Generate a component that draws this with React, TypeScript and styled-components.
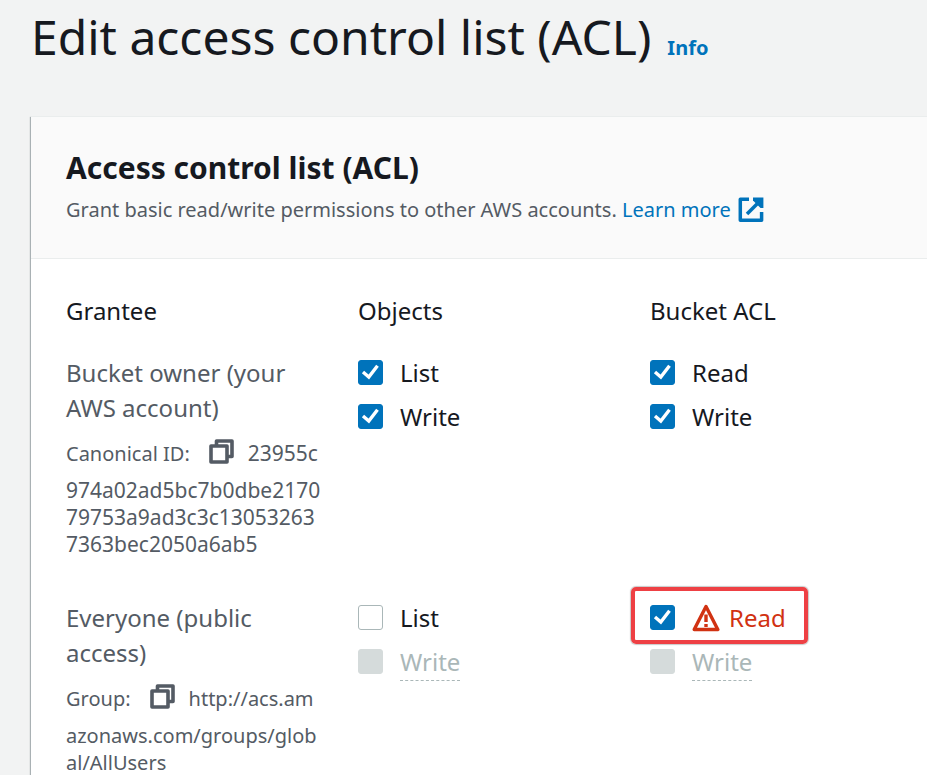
import React, { useId, useState } from "react";
import styled, { createGlobalStyle } from "styled-components";

const GlobalStyle = createGlobalStyle`
  *, *::before, *::after { box-sizing: border-box; }
  html { background: #f2f3f3; overflow: hidden; }
  body {
    margin: 0;
    font-family: "Noto Sans", "Open Sans", sans-serif;
    font-size: 24px;
    line-height: 35px;
    color: #16191f;
  }
`;

const Page = styled.main`
  padding-left: 31px;
`;

const PageHeader = styled.header`
  display: flex;
  align-items: baseline;
  gap: 16px;
  padding: 5px 0 47px;
`;

const PageTitle = styled.h1`
  margin: 0;
  font-size: 48px;
  line-height: 64px;
  font-weight: 400;
  white-space: nowrap;
`;

const InfoLink = styled.a`
  color: #0073bb;
  font-size: 20px;
  font-weight: 700;
  text-decoration: none;
`;

const Panel = styled.section`
  background: #fff;
  border-top: 1px solid #eaeded;
  box-shadow: -1px 1px 1px 0 rgba(0, 28, 36, 0.3);
`;

const PanelHeader = styled.header`
  padding: 29px 35px 31px;
  background: #fafafa;
  border-bottom: 1px solid #eaeded;
`;

const PanelTitle = styled.h2`
  margin: 0;
  font-size: 30px;
  line-height: 44px;
  font-weight: 700;
`;

const PanelDescription = styled.p`
  margin: 2px 0 0;
  color: #545b64;
  font-size: 20px;
  white-space: nowrap;
`;

const TextLink = styled.a`
  display: inline-flex;
  align-items: center;
  gap: 7px;
  color: #0073bb;
  text-decoration: none;
`;

const GrantTable = styled.table`
  width: 100%;
  margin-top: 34px;
  padding: 0 0 0 35px;
  table-layout: fixed;
  border-collapse: separate;
  border-spacing: 0;
`;

const Column = styled.col<{ $rest?: boolean }>`
  width: ${(p) => (p.$rest ? "auto" : "292px")};
`;

const ColumnHeading = styled.th`
  padding: 0 40px 27px 0;
  font-weight: 400;
  text-align: left;
`;

const GranteeCell = styled.th`
  padding: 0 40px 42px 0;
  color: #545b64;
  font-weight: 400;
  text-align: left;
  vertical-align: top;
`;

const Cell = styled.td`
  padding: 0;
  vertical-align: top;
`;

const GranteeDetail = styled.div`
  margin-top: 10px;
  font-size: 20px;
  line-height: 27px;
`;

const DetailLine = styled.div`
  display: flex;
  align-items: center;
  height: 36px;
  white-space: nowrap;
`;

const DetailValue = styled.div<{ $hash?: boolean }>`
  font-size: ${(p) => (p.$hash ? "21px" : "20px")};
`;

const DetailText = styled.div`
  margin-top: 6px;
`;

const CopyButton = styled.button`
  display: flex;
  margin: 0 14px 3px 19px;
  padding: 0;
  border: 0;
  background: none;
  color: #545b64;
  cursor: pointer;
`;

const OptionList = styled.div`
  display: flex;
  flex-direction: column;
  align-items: flex-start;
  gap: 9px;
`;

const Option = styled.div`
  position: relative;
  display: flex;
  align-items: center;
  gap: 17px;
`;

const Tick = styled.input`
  appearance: none;
  width: 25px;
  height: 25px;
  margin: 0;
  border: 1px solid #aab7b8;
  border-radius: 3px;
  background: #fff;

  &:checked {
    border-color: #0073bb;
    background: #0073bb;
  }
  &:disabled {
    border-color: #d5dbdb;
    background: #d5dbdb;
  }
`;

const TickBox = styled.span`
  display: grid;
  flex: none;

  > * { grid-area: 1 / 1; }
  > svg { pointer-events: none; z-index: 1; }
`;

const OptionLabel = styled.label<{ $tone: "normal" | "warning" | "disabled" }>`
  position: relative;
  display: flex;
  align-items: center;
  gap: 9px;
  color: ${(p) =>
    p.$tone === "warning" ? "#d13212" : p.$tone === "disabled" ? "#aab7b8" : "#16191f"};

  &::after {
    content: ${(p) => (p.$tone === "disabled" ? '""' : "none")};
    position: absolute;
    left: 0;
    right: 0;
    bottom: -2px;
    border-bottom: 1px dashed #aab7b8;
  }
`;

const Highlight = styled.div`
  position: absolute;
  inset: -13px -22px -9px -19px;
  border: 4px solid #ee4044;
  border-radius: 5px;
  box-shadow: 0 0 1px 1px rgba(120, 120, 120, 0.4);
  pointer-events: none;
`;

function ExternalIcon() {
  return (
    <svg width="26" height="26" viewBox="0 0 26 26" fill="none" stroke="currentColor" strokeWidth="3.5" aria-hidden="true">
      <path d="M11 2.3H2.3V23.3H23.6V15" strokeLinejoin="round" />
      <path d="M9 17L21 5" />
      <path d="M15 0.5H25.4V11H22.5L15 3.5Z" fill="currentColor" stroke="none" />
    </svg>
  );
}

function CopyIcon() {
  return (
    <svg width="25" height="25" viewBox="0 0 25 25" fill="none" stroke="currentColor" strokeWidth="3.6" strokeLinejoin="round" aria-hidden="true">
      <path d="M2 7H18V23H2Z" />
      <path d="M7.5 6V2H23V17.5H19" />
    </svg>
  );
}

function WarningIcon() {
  return (
    <svg width="28" height="28" viewBox="0 0 28 28" fill="none" stroke="currentColor" strokeWidth="3.4" aria-hidden="true">
      <path d="M14 2.5L25.8 25.5H2.2Z" strokeLinejoin="round" />
      <path d="M14 10.5V18M14 20V23" strokeWidth="3.4" />
    </svg>
  );
}

function CheckMark() {
  return (
    <svg width="25" height="25" viewBox="0 0 25 25" fill="none" stroke="#fff" strokeWidth="3.4" aria-hidden="true">
      <path d="M5 12L10.8 17L19.5 5.8" />
    </svg>
  );
}

interface PermissionProps {
  label: string;
  checked?: boolean;
  disabled?: boolean;
  warning?: boolean;
}

function Permission({ label, checked = false, disabled = false, warning = false }: PermissionProps) {
  const id = useId();
  const [on, setOn] = useState(checked);
  return (
    <Option>
      <TickBox>
        <Tick type="checkbox" id={id} checked={on} disabled={disabled} onChange={(e) => setOn(e.target.checked)} />
        {on && <CheckMark />}
      </TickBox>
      <OptionLabel htmlFor={id} $tone={disabled ? "disabled" : warning ? "warning" : "normal"}>
        {warning && <WarningIcon />}
        {label}
      </OptionLabel>
      {warning && <Highlight />}
    </Option>
  );
}

interface Grant {
  grantee: string;
  idLabel: string;
  idStart: string;
  idRest: string[];
  hash?: boolean;
  objects: PermissionProps[];
  acl: PermissionProps[];
}

const grants: Grant[] = [
  {
    grantee: "Bucket owner (your AWS account)",
    idLabel: "Canonical ID:",
    idStart: "23955c",
    idRest: ["974a02ad5bc7b0dbe2170", "79753a9ad3c3c13053263", "7363bec2050a6ab5"],
    hash: true,
    objects: [{ label: "List", checked: true }, { label: "Write", checked: true }],
    acl: [{ label: "Read", checked: true }, { label: "Write", checked: true }],
  },
  {
    grantee: "Everyone (public access)",
    idLabel: "Group:",
    idStart: "http://acs.am",
    idRest: ["azonaws.com/groups/glob", "al/AllUsers"],
    objects: [{ label: "List" }, { label: "Write", disabled: true }],
    acl: [{ label: "Read", checked: true, warning: true }, { label: "Write", disabled: true }],
  },
];

export default function App() {
  return (
    <Page>
      <GlobalStyle />
      <PageHeader>
        <PageTitle>Edit access control list (ACL)</PageTitle>
        <InfoLink href="#info">Info</InfoLink>
      </PageHeader>
      <Panel>
        <PanelHeader>
          <PanelTitle>Access control list (ACL)</PanelTitle>
          <PanelDescription>
            Grant basic read/write permissions to other AWS accounts.{" "}
            <TextLink href="#learn-more">
              Learn more
              <ExternalIcon />
            </TextLink>
          </PanelDescription>
        </PanelHeader>
        <GrantTable>
          <colgroup>
            <Column />
            <Column />
            <Column $rest />
          </colgroup>
          <thead>
            <tr>
              <ColumnHeading scope="col">Grantee</ColumnHeading>
              <ColumnHeading scope="col">Objects</ColumnHeading>
              <ColumnHeading scope="col">Bucket ACL</ColumnHeading>
            </tr>
          </thead>
          <tbody>
            {grants.map((grant) => (
              <tr key={grant.idLabel}>
                <GranteeCell scope="row">
                  {grant.grantee}
                  <GranteeDetail>
                    <DetailLine>
                      {grant.idLabel}
                      <CopyButton type="button" aria-label={`Copy ${grant.idLabel}`}>
                        <CopyIcon />
                      </CopyButton>
                      <DetailValue $hash={grant.hash}>{grant.idStart}</DetailValue>
                    </DetailLine>
                    <DetailText>
                      {grant.idRest.map((part) => (
                        <DetailValue key={part} $hash={grant.hash}>{part}</DetailValue>
                      ))}
                    </DetailText>
                  </GranteeDetail>
                </GranteeCell>
                <Cell>
                  <OptionList>
                    {grant.objects.map((item) => <Permission key={item.label} {...item} />)}
                  </OptionList>
                </Cell>
                <Cell>
                  <OptionList>
                    {grant.acl.map((item) => <Permission key={item.label} {...item} />)}
                  </OptionList>
                </Cell>
              </tr>
            ))}
          </tbody>
        </GrantTable>
      </Panel>
    </Page>
  );
}
